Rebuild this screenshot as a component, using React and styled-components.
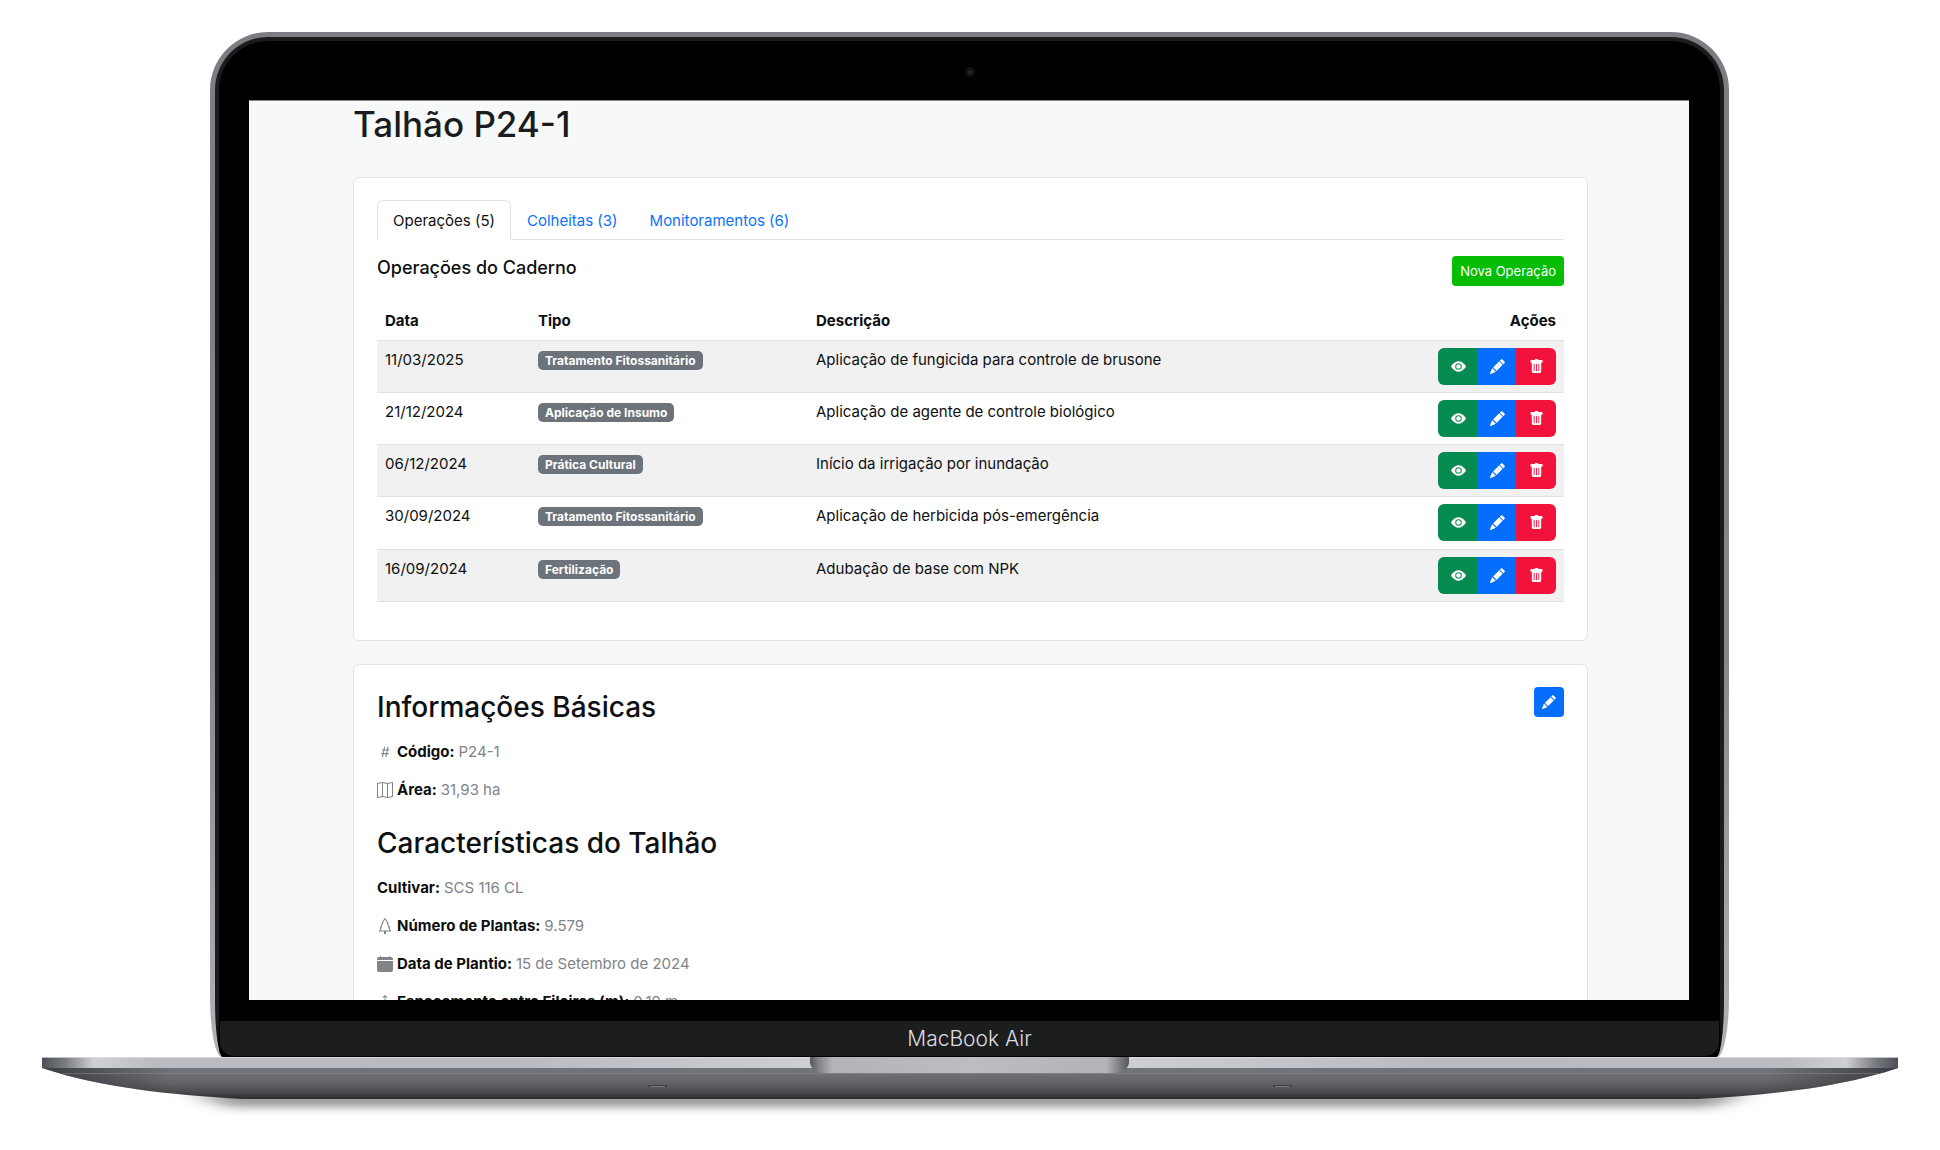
import React from "react";
import styled, { createGlobalStyle, css } from "styled-components";
import { BsEyeFill, BsPencilFill, BsTrashFill, BsHash, BsMap, BsTree, BsCalendarFill, BsArrowsVertical } from "react-icons/bs";

const Global = createGlobalStyle`
  *, *::before, *::after { box-sizing: border-box; }
  body {
    margin: 0;
    background: #fff;
    color: #0d0f10;
    font: 400 15px/24px Inter, "Liberation Sans", sans-serif;
  }
  h1, h2, h3, p { margin: 0; padding: 0; }
`;

const Stage = styled.main`
  padding: 32px 42px 40px;
  overflow: hidden;
`;

const Lid = styled.div`
  margin: 0 169px 0 168px;
  padding: 5px 5px 0;
  border-radius: 58px 58px 12px 12px / 58px 58px 60px 60px;
  background: linear-gradient(#7b7d82, #85868b 60%, #b2b2b9);
  overflow: hidden;
`;

const Rim = styled.div`
  padding: 4px 4px 0;
  border-radius: 53px 53px 8px 8px / 53px 53px 56px 56px;
  background: linear-gradient(#1b1d1d 96%, #050505);
  overflow: hidden;
`;

const Bezel = styled.div`
  display: flex;
  flex-direction: column;
  border-radius: 49px 49px 0 0;
  background: #000;
`;

const CameraBar = styled.div`
  display: flex;
  align-items: center;
  justify-content: center;
  height: 59px;
  padding-top: 3px;
`;

const Camera = styled.span`
  width: 10px;
  height: 10px;
  border: 3px solid #101112;
  border-radius: 50%;
  background: #26292c;
`;

const Viewport = styled.div`
  margin: 0 31px 21px 30px;
  aspect-ratio: 16 / 10;
  overflow: hidden;
  background: #f7f9f9;
  border-top: 1px solid #8a8588;
`;

const Chin = styled.div`
  display: flex;
  align-items: center;
  justify-content: center;
  height: 35px;
  margin: 0 1px 1px;
  padding-top: 1px;
  border-radius: 0 0 14px 14px;
  background: #1c1e1e;
  color: #dcdde1;
  font-size: 21px;
  font-weight: 300;
`;

const Base = styled.svg`
  display: block;
  width: 100%;
  height: 70px;
`;

const Page = styled.div`
  display: flex;
  flex-direction: column;
  gap: 23px;
  padding: 0 101px 0 104px;
`;

const Title = styled.h1`
  padding-bottom: 30px;
  font-size: 35px;
  line-height: 46px;
  font-weight: 500;
  color: #191c1e;
`;

const Card = styled.section`
  padding: ${(p) => (p.$roomy ? "22px 23px 38px" : "22px 23px")};
  border: 1px solid #e1e4e7;
  border-radius: 6px;
  background: #fff;
`;

const Tabs = styled.div`
  display: flex;
  border-bottom: 1px solid #dee2e6;
`;

const Tab = styled.button`
  height: 40px;
  margin-bottom: -1px;
  padding: 2px 15px 0;
  border: 1px solid transparent;
  border-radius: 6px 6px 0 0;
  background: transparent;
  color: #0a72fb;
  font: inherit;
  ${(p) =>
    p.$active &&
    css`
      border-color: #dee2e6 #dee2e6 #fff;
      background: #fff;
      color: #111;
    `}
`;

const CardHead = styled.div`
  display: flex;
  align-items: flex-start;
  justify-content: space-between;
`;

const PanelHead = styled(CardHead)`
  padding: 16px 0;
`;

const PanelTitle = styled.h3`
  font-size: 18px;
  line-height: 24px;
  font-weight: 500;
`;

const Section = styled.h2`
  padding-bottom: 13px;
  font-size: 28px;
  line-height: 40px;
  font-weight: 500;
`;

const Solid = styled.button`
  display: inline-flex;
  align-items: center;
  justify-content: center;
  height: 30px;
  padding: 0 8px;
  border: 0;
  border-radius: 4px;
  background: ${(p) => p.$bg};
  color: #fff;
  font: 400 13px/20px Inter, "Liberation Sans", sans-serif;
`;

const Table = styled.table`
  width: 100%;
  height: 300px;
  table-layout: fixed;
  border-collapse: collapse;
  text-align: left;
  th, td {
    padding: 7px 8px;
    border-bottom: 1px solid #dee2e6;
    vertical-align: top;
  }
  th { height: 38px; padding-bottom: 6px; font-weight: 700; }
  th:last-child, td:last-child { text-align: right; }
  tbody tr:nth-child(odd) { background: #f1f1f2; }
`;

const Col = styled.col`
  width: ${(p) => p.$w};
`;

const Badge = styled.span`
  display: inline-block;
  padding: 0 7px;
  border-radius: 5px;
  background: #6c737a;
  color: #fff;
  font-size: 12px;
  line-height: 19px;
  font-weight: 700;
`;

const Group = styled.div`
  display: inline-flex;
  vertical-align: top;
  border-radius: 6px;
  overflow: hidden;
`;

const Action = styled.button`
  display: grid;
  place-items: center;
  width: 40px;
  height: 37px;
  padding: 0;
  border: 0;
  background: ${(p) => p.$bg};
  color: #fff;
  font-size: 15px;
  & + & { margin-left: -1px; }
`;

const Fact = styled.p`
  display: flex;
  align-items: center;
  gap: 4px;
  padding-bottom: 14px;
  color: #808388;
  svg { flex: none; }
`;

const Name = styled.strong`
  color: #0d0f10;
  font-weight: 700;
`;

const Facts = styled.div`
  padding-bottom: ${(p) => (p.$last ? "0" : "7px")};
`;

const operations = [
  ["11/03/2025", "Tratamento Fitossanitário", "Aplicação de fungicida para controle de brusone"],
  ["21/12/2024", "Aplicação de Insumo", "Aplicação de agente de controle biológico"],
  ["06/12/2024", "Prática Cultural", "Início da irrigação por inundação"],
  ["30/09/2024", "Tratamento Fitossanitário", "Aplicação de herbicida pós-emergência"],
  ["16/09/2024", "Fertilização", "Adubação de base com NPK"],
];

const basics = [
  [BsHash, "Código:", "P24-1"],
  [BsMap, "Área:", "31,93 ha"],
];

const traits = [
  [null, "Cultivar:", "SCS 116 CL"],
  [BsTree, "Número de Plantas:", "9.579"],
  [BsCalendarFill, "Data de Plantio:", "15 de Setembro de 2024"],
  [BsArrowsVertical, "Espaçamento entre Fileiras (m):", "0,19 m"],
];

function FactList({ items, last }) {
  return (
    <Facts $last={last}>
      {items.map(([Icon, name, value]) => (
        <Fact key={name}>
          {Icon && <Icon size={16} />}
          <Name>{name}</Name>
          <span>{value}</span>
        </Fact>
      ))}
    </Facts>
  );
}

function LaptopBase() {
  return (
    <Base viewBox="0 0 1856 70" preserveAspectRatio="none" aria-hidden="true">
      <defs>
        <linearGradient id="deck" x1="0" x2="1" y1="0" y2="0">
          <stop offset="0" stopColor="#4d5056" />
          <stop offset="0.012" stopColor="#777a80" />
          <stop offset="0.028" stopColor="#d0d0d4" />
          <stop offset="0.06" stopColor="#bbbbc2" />
          <stop offset="0.25" stopColor="#b9b9c0" />
          <stop offset="0.41" stopColor="#cdced2" />
          <stop offset="0.59" stopColor="#cdced2" />
          <stop offset="0.75" stopColor="#b9b9c0" />
          <stop offset="0.94" stopColor="#bbbbc2" />
          <stop offset="0.972" stopColor="#d0d0d4" />
          <stop offset="0.988" stopColor="#777a80" />
          <stop offset="1" stopColor="#4d5056" />
        </linearGradient>
        <linearGradient id="belly" x1="0" x2="0" y1="0" y2="1">
          <stop offset="0" stopColor="#70757b" />
          <stop offset="0.18" stopColor="#6e7177" />
          <stop offset="0.5" stopColor="#616267" />
          <stop offset="0.8" stopColor="#48494d" />
          <stop offset="1" stopColor="#2b2c2f" />
        </linearGradient>
        <linearGradient id="edges" x1="0" x2="1" y1="0" y2="0">
          <stop offset="0" stopColor="#2d2f33" stopOpacity="0.8" />
          <stop offset="0.07" stopColor="#2d2f33" stopOpacity="0" />
          <stop offset="0.93" stopColor="#2d2f33" stopOpacity="0" />
          <stop offset="1" stopColor="#2d2f33" stopOpacity="0.8" />
        </linearGradient>
        <linearGradient id="notch" x1="0" x2="1" y1="0" y2="0">
          <stop offset="0" stopColor="#55575c" />
          <stop offset="0.03" stopColor="#85878c" />
          <stop offset="0.07" stopColor="#b3b3ba" />
          <stop offset="0.5" stopColor="#bcbcc3" />
          <stop offset="0.93" stopColor="#b3b3ba" />
          <stop offset="0.97" stopColor="#7b7f84" />
          <stop offset="1" stopColor="#55575c" />
        </linearGradient>
        <filter id="soft" x="-5%" y="-100%" width="110%" height="300%">
          <feGaussianBlur stdDeviation="14 5" />
        </filter>
      </defs>
      <path d="M150 36H1706L1670 50H186Z" fill="#000" fillOpacity="0.42" filter="url(#soft)" />
      <path d="M0 11C60 31 130 38 200 42H1656C1726 38 1796 31 1856 11Z" fill="url(#belly)" />
      <path d="M0 11C60 31 130 38 200 42H1656C1726 38 1796 31 1856 11Z" fill="url(#edges)" />
      <rect y="16" x="20" width="1816" height="1" fill="#8b8e92" fillOpacity="0.5" />
      <rect width="1856" height="11" fill="url(#deck)" />
      <rect width="1856" height="1" fill="#e4e4e7" fillOpacity="0.7" />
      <path d="M768 0H1087V6Q1085 16 1071 16H784Q770 16 768 6Z" fill="url(#notch)" />
      <rect x="606" y="28" width="19" height="2" rx="1" fill="#3f4044" />
      <rect x="608" y="29" width="15" height="1" fill="#76787d" />
      <rect x="1231" y="28" width="19" height="2" rx="1" fill="#3f4044" />
      <rect x="1233" y="29" width="15" height="1" fill="#76787d" />
    </Base>
  );
}

export default function App() {
  return (
    <Stage>
      <Global />
      <Lid>
        <Rim>
          <Bezel>
            <CameraBar>
              <Camera />
            </CameraBar>
            <Viewport>
              <Page>
                <div>
                  <Title>Talhão P24-1</Title>
                  <Card $roomy>
                    <Tabs role="tablist">
                      <Tab role="tab" aria-selected="true" $active>Operações (5)</Tab>
                      <Tab role="tab" aria-selected="false">Colheitas (3)</Tab>
                      <Tab role="tab" aria-selected="false">Monitoramentos (6)</Tab>
                    </Tabs>
                    <PanelHead>
                      <PanelTitle>Operações do Caderno</PanelTitle>
                      <Solid $bg="#05bd05">Nova Operação</Solid>
                    </PanelHead>
                    <Table>
                      <colgroup>
                        <Col $w="153px" />
                        <Col $w="278px" />
                        <Col $w="auto" />
                        <Col $w="136px" />
                      </colgroup>
                      <thead>
                        <tr>
                          <th>Data</th>
                          <th>Tipo</th>
                          <th>Descrição</th>
                          <th>Ações</th>
                        </tr>
                      </thead>
                      <tbody>
                        {operations.map(([date, kind, text]) => (
                          <tr key={date}>
                            <td>{date}</td>
                            <td><Badge>{kind}</Badge></td>
                            <td>{text}</td>
                            <td>
                              <Group role="group">
                                <Action $bg="#058a50" aria-label="Ver"><BsEyeFill /></Action>
                                <Action $bg="#056efc" aria-label="Editar"><BsPencilFill /></Action>
                                <Action $bg="#f2123c" aria-label="Excluir"><BsTrashFill /></Action>
                              </Group>
                            </td>
                          </tr>
                        ))}
                      </tbody>
                    </Table>
                  </Card>
                </div>
                <Card>
                  <CardHead>
                    <Section>Informações Básicas</Section>
                    <Solid $bg="#056efc" aria-label="Editar"><BsPencilFill size={14} /></Solid>
                  </CardHead>
                  <FactList items={basics} />
                  <Section>Características do Talhão</Section>
                  <FactList items={traits} last />
                </Card>
              </Page>
            </Viewport>
            <Chin>MacBook Air</Chin>
          </Bezel>
        </Rim>
      </Lid>
      <LaptopBase />
    </Stage>
  );
}
